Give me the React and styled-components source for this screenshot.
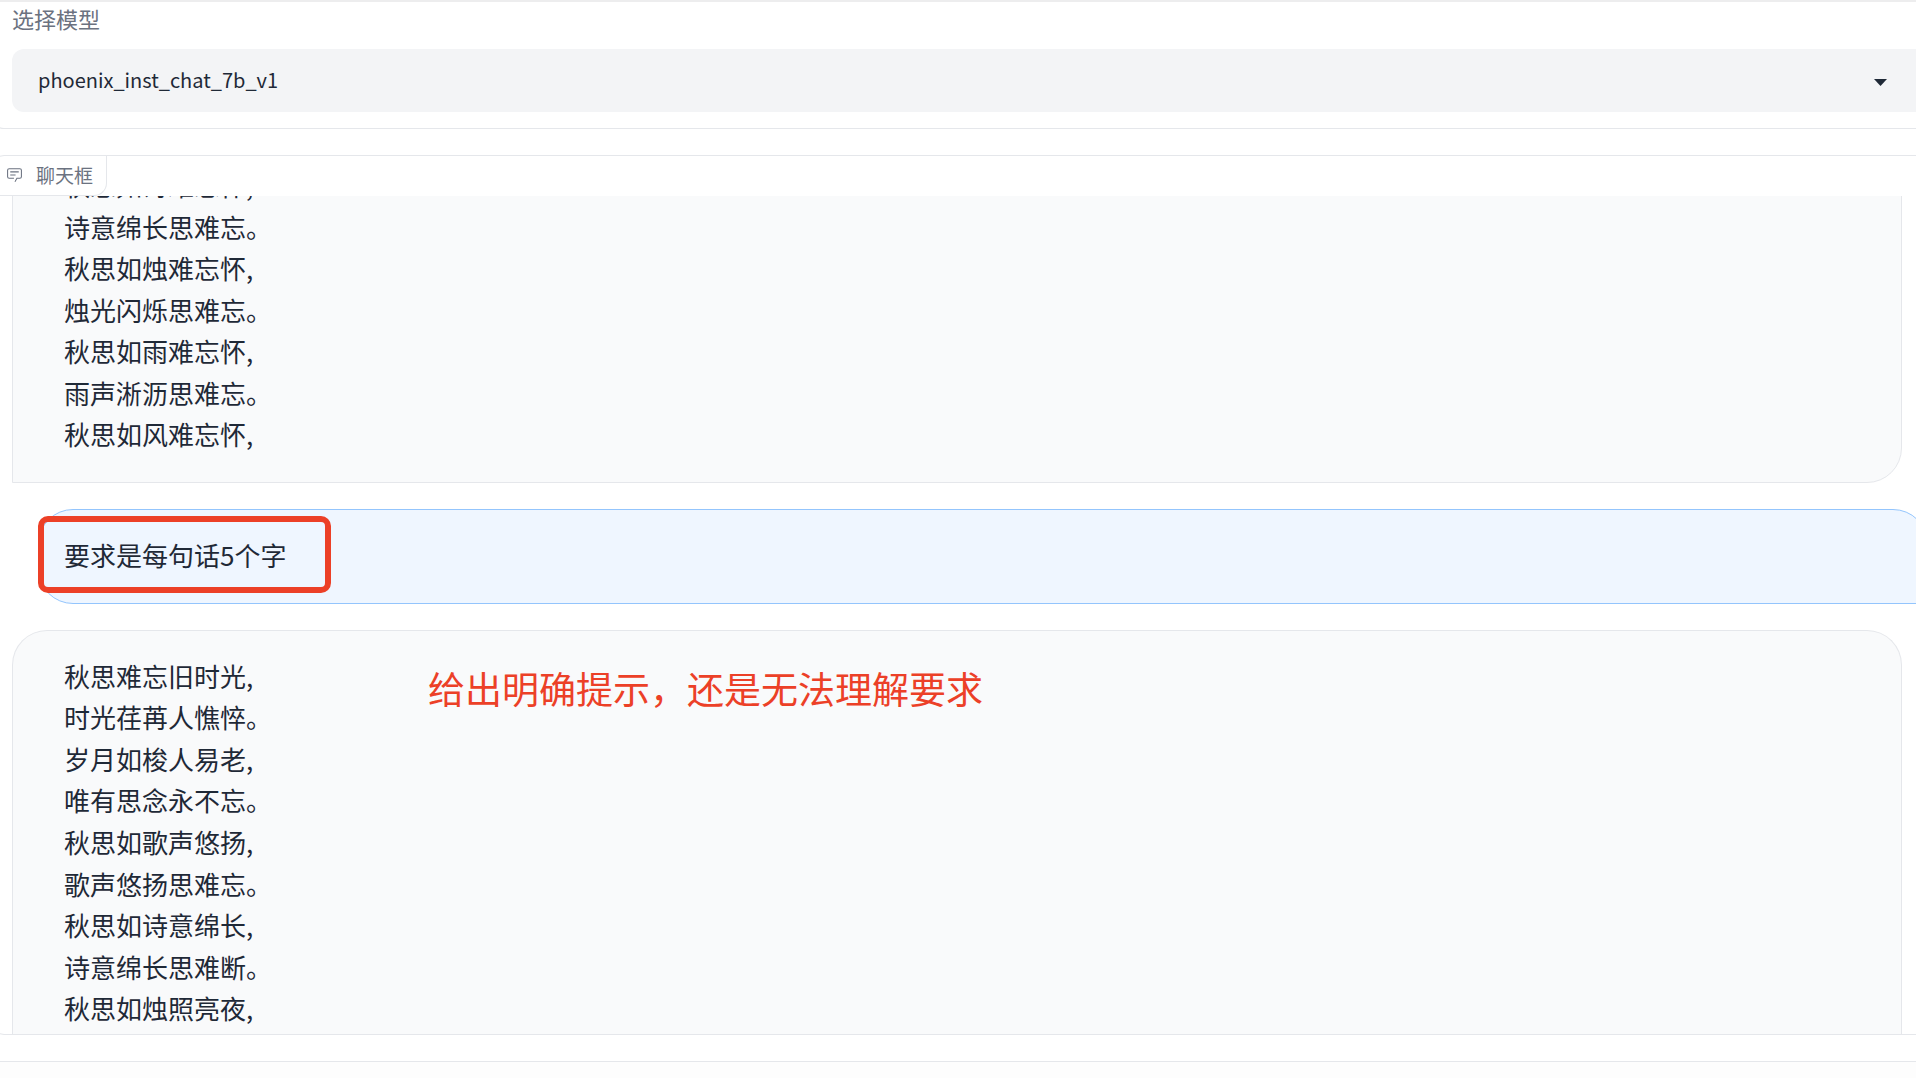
import styled, { createGlobalStyle } from "styled-components";

const firstPoem = [
  "秋思如诗难忘怀,",
  "诗意绵长思难忘。",
  "秋思如烛难忘怀,",
  "烛光闪烁思难忘。",
  "秋思如雨难忘怀,",
  "雨声淅沥思难忘。",
  "秋思如风难忘怀,",
];

const secondPoem = [
  "秋思难忘旧时光,",
  "时光荏苒人憔悴。",
  "岁月如梭人易老,",
  "唯有思念永不忘。",
  "秋思如歌声悠扬,",
  "歌声悠扬思难忘。",
  "秋思如诗意绵长,",
  "诗意绵长思难断。",
  "秋思如烛照亮夜,",
];

const App = () => {
  return (
    <>
      <GlobalStyle />
      <Page>
        <ModelPanel>
          <Label htmlFor="model">选择模型</Label>
          <Field>
            <Select id="model" defaultValue="phoenix_inst_chat_7b_v1">
              <option>phoenix_inst_chat_7b_v1</option>
            </Select>
            <Arrow viewBox="0 0 13 7" aria-hidden="true">
              <path d="M0 0h13L6.500 7z" />
            </Arrow>
          </Field>
        </ModelPanel>

        <ChatPanel>
          <Tab>
            <ChatIcon viewBox="0 0 32 32" aria-hidden="true">
              <path d="M17.740 30L16 29l4-7h6a2 2 0 0 0 2-2V8a2 2 0 0 0-2-2H6a2 2 0 0 0-2 2v12a2 2 0 0 0 2 2h9v2H6a4 4 0 0 1-4-4V8a4 4 0 0 1 4-4h20a4 4 0 0 1 4 4v12a4 4 0 0 1-4 4h-4.840Z" />
              <path d="M8 10h16v2H8zm0 6h10v2H8z" />
            </ChatIcon>
            聊天框
          </Tab>
          <Messages>
            <BotMessage>
              {firstPoem.map((line) => (
                <Line key={line}>{line}</Line>
              ))}
            </BotMessage>
            <UserMessage>
              <Line>要求是每句话5个字</Line>
              <Highlight />
            </UserMessage>
            <BotMessage $cut>
              {secondPoem.map((line) => (
                <Line key={line}>{line}</Line>
              ))}
              <Note>给出明确提示，还是无法理解要求</Note>
            </BotMessage>
          </Messages>
        </ChatPanel>

        <InputPanel />
      </Page>
    </>
  );
};

const GlobalStyle = createGlobalStyle`
  * {
    box-sizing: border-box;
  }

  body {
    margin: 0;
    background: #fff;
    color: #1f2937;
    font-family: "Noto Sans CJK SC", "Noto Sans", sans-serif;
  }
`;

// The panels run past both sides of the window
const Page = styled.main`
  display: flex;
  flex-direction: column;
  gap: 26px;
  height: 100vh;
  overflow: hidden;
  border-top: 2px solid #ededee;
`;

const Panel = styled.section`
  margin: 0 -30px 0 -9px;
  border: 1px solid #e5e7eb;
  border-radius: 13px;
`;

const ModelPanel = styled(Panel)`
  display: flex;
  flex-direction: column;
  gap: 15px;
  padding: 0 17px 16px 20px;
  border-top: 0;
  border-top-left-radius: 0;
`;

const Label = styled.label`
  color: #6b7280;
  font-size: 22px;
  line-height: 32px;
`;

const Field = styled.div`
  display: grid;
  align-items: center;

  > * {
    grid-area: 1 / 1;
  }
`;

const Select = styled.select`
  width: 100%;
  height: 63px;
  padding: 0 26px 3px;
  appearance: none;
  border: 0;
  border-radius: 12px;
  background: #f3f4f6;
  color: #1f2937;
  font-family: inherit;
  font-size: 20px;
`;

const Arrow = styled.svg`
  justify-self: end;
  width: 13px;
  height: 7px;
  margin: 3px 41px 0 0;
  fill: #1f2937;
  pointer-events: none;
`;

const ChatPanel = styled(Panel)`
  display: flex;
  flex: 1;
  flex-direction: column;
  min-height: 0;
  overflow: hidden;
`;

const Tab = styled.div`
  display: flex;
  flex-shrink: 0;
  align-items: center;
  align-self: flex-start;
  gap: 13px;
  height: 40px;
  padding: 0 13px 2px 14px;
  border-right: 1px solid #e5e7eb;
  border-bottom: 1px solid #e5e7eb;
  border-bottom-right-radius: 13px;
  color: #6b7280;
  font-size: 19px;
`;

const ChatIcon = styled.svg`
  width: 17px;
  height: 17px;
  fill: #6b7280;
`;

// Keeps the newest message at the bottom edge
const Messages = styled.div`
  display: flex;
  flex: 1;
  flex-direction: column;
  justify-content: flex-end;
  gap: 26px;
  min-height: 0;
  padding: 0 17px 0 20px;
  overflow: hidden;
`;

const Message = styled.div`
  position: relative;
  flex-shrink: 0;
  border: 1px solid;
  border-radius: 35px;
  font-size: 26px;
  line-height: 1.6;
`;

const BotMessage = styled(Message)`
  margin-right: 26px;
  padding: 24px 51px ${({ $cut }) => ($cut ? "5px" : "27px")};
  border-color: #e5e7eb;
  border-bottom-left-radius: 0;
  background: #f9fafb;

  ${({ $cut }) => $cut && "border-bottom: 0; border-bottom-right-radius: 0;"}
`;

const UserMessage = styled(Message)`
  margin-left: 26px;
  padding: 24px 25px 27px;
  border-color: #93c5fd;
  border-bottom-right-radius: 0;
  background: #eff6ff;
`;

const Line = styled.p`
  margin: 0;
`;

const Highlight = styled.div`
  position: absolute;
  top: 6px;
  left: -1px;
  width: 293px;
  height: 77px;
  border: 6px solid #ec4027;
  border-radius: 10px;
`;

const Note = styled.p`
  position: absolute;
  top: 28px;
  left: 415px;
  margin: 0;
  color: #ec4027;
  font-size: 37px;
  white-space: nowrap;
`;

const InputPanel = styled(Panel)`
  flex-shrink: 0;
  height: 17px;
  border-bottom: 0;
  border-bottom-left-radius: 0;
  background: #fdfdfd;
`;

export default App;
